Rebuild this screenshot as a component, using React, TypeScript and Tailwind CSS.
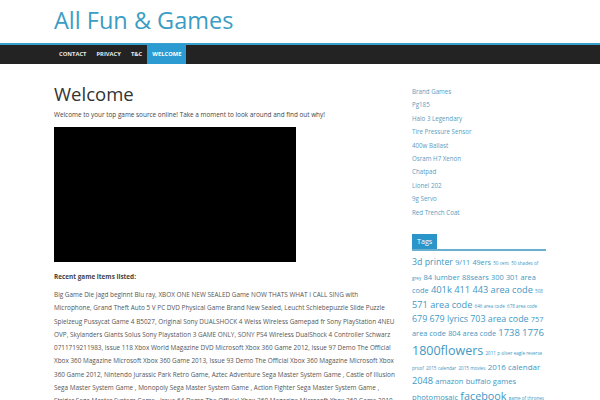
import React from "react";

const links = [
  "Brand Games",
  "Pg185",
  "Halo 3 Legendary",
  "Tire Pressure Sensor",
  "400w Ballast",
  "Osram H7 Xenon",
  "Chatpad",
  "Lionel 202",
  "9g Servo",
  "Red Trench Coat",
];

const tags: [string, number][] = [
  ["3d printer", 8.8],
  ["9/11", 7.2],
  ["49ers", 7.2],
  ["50 cent", 4.6],
  ["50 shades of grey", 4.6],
  ["84 lumber", 7.6],
  ["88sears", 7.4],
  ["300", 7.4],
  ["301 area code", 7.4],
  ["401k", 9.4],
  ["411", 9.4],
  ["443 area code", 9.2],
  ["508", 4.6],
  ["571 area code", 9.2],
  ["646 area code", 4.6],
  ["678 area code", 4.6],
  ["679", 8.9],
  ["679 lyrics", 8.9],
  ["703 area code", 8.9],
  ["757 area code", 7.4],
  ["804 area code", 7.3],
  ["1738", 9.4],
  ["1776", 9.6],
  ["1800flowers", 12.5],
  ["2011 p silver eagle reverse proof", 4.6],
  ["2015 calendar", 4.6],
  ["2015 movies", 4.6],
  ["2016 calendar", 8],
  ["2048", 9.2],
  ["amazon", 7.6],
  ["buffalo games photomosaic", 7.6],
  ["facebook", 10.8],
  ["game of thrones", 4.6],
];

const body =
  "Big Game Die Jagd beginnt Blu ray, XBOX ONE NEW SEALED Game NOW THATS WHAT I CALL SING with Microphone, Grand Theft Auto 5 V PC DVD Physical Game Brand New Sealed, Leucht Schiebepuzzle Slide Puzzle Spielzeug Pussycat Game 4 B5027, Original Sony DUALSHOCK 4 Weiss Wireless Gamepad fr Sony PlayStation 4NEU OVP, Skylanders Giants Solus Sony Playstation 3 GAME ONLY, SONY PS4 Wireless DualShock 4 Controller Schwarz 0711719211983, Issue 118 Xbox World Magazine DVD Microsoft Xbox 360 Game 2012, Issue 97 Demo The Official Xbox 360 Magazine Microsoft Xbox 360 Game 2013, Issue 93 Demo The Official Xbox 360 Magazine Microsoft Xbox 360 Game 2012, Nintendo Jurassic Park Retro Game, Aztec Adventure Sega Master System Game , Castle of Illusion Sega Master System Game , Monopoly Sega Master System Game , Action Fighter Sega Master System Game , Strider Sega Master System Game , Issue 64 Demo The Official Xbox 360 Magazine Microsoft Xbox 360 Game 2010, PLAYSTATION 3 GAME Disney BOLT FREE UK PP, Issue 71 Demo The Official Xbox 360 Magazine Microsoft Xbox 360 Game 2011, Playstation PS4 Game FIFA 16 BRAND NEW SEALED, PS2 Racing Game Bundle F1 2002 F1 2003 18 Wheeler, Xbox 360 Game Bundle";

export default function App() {
  return (
    <div className="w-[600px] h-[400px] overflow-hidden bg-white font-['Open_Sans',sans-serif]">
      <header className="h-[43px] pl-[54px] pt-[4px]">
        <h1 className="text-[23.5px] leading-[32px] text-[#3b9dc4] font-normal">All Fun &amp; Games</h1>
      </header>
      <nav className="border-t-[2px] border-[#3aa0cd] bg-[#232323] h-[21px] pl-[54px] flex items-stretch">
        {["CONTACT", "PRIVACY", "T&C"].map((n) => (
          <span key={n} className="px-[5px] flex items-center text-[5.8px] font-bold text-[#e8e8e8]">
            {n}
          </span>
        ))}
        <span className="px-[5px] flex items-center text-[5.8px] font-bold text-white bg-[#2b9bd2] -mt-[1px]">
          WELCOME
        </span>
      </nav>
      <div className="flex pl-[54px] pt-[18px] gap-[15px]">
        <main className="w-[343px]">
          <h2 className="text-[18.5px] leading-[24px] text-[#333]">Welcome</h2>
          <p className="text-[6.4px] leading-[12px] text-[#444] mt-[3px]">
            Welcome to your top game source online! Take a moment to look around and find out why!
          </p>
          <div className="w-[242px] h-[135px] bg-black mt-[6px]" />
          <p className="text-[6.4px] leading-[13px] font-bold text-[#444] mt-[8px]">Recent game items listed:</p>
          <p className="text-[6.4px] leading-[13.3px] text-[#555] mt-[5px]">{body}</p>
        </main>
        <aside className="w-[134px] pt-[3px]">
          <ul className="flex flex-col">
            {links.map((l) => (
              <li key={l} className="text-[6.2px] leading-[13.4px] text-[#5a9cc2]">
                {l}
              </li>
            ))}
          </ul>
          <div className="mt-[15px] flex items-end border-b-[2px] border-[#6aaed0]">
            <span className="bg-[#2995c9] text-white text-[7.2px] px-[5px] h-[15px] flex items-center">Tags</span>
          </div>
          <div className="mt-[4px] text-[8.5px] leading-[1.55] text-[#3f98c4]">
            {tags.map(([t, s]) => (
              <React.Fragment key={t}>
                <span style={{ fontSize: s }}>{t}</span>{" "}
              </React.Fragment>
            ))}
          </div>
        </aside>
      </div>
    </div>
  );
}
